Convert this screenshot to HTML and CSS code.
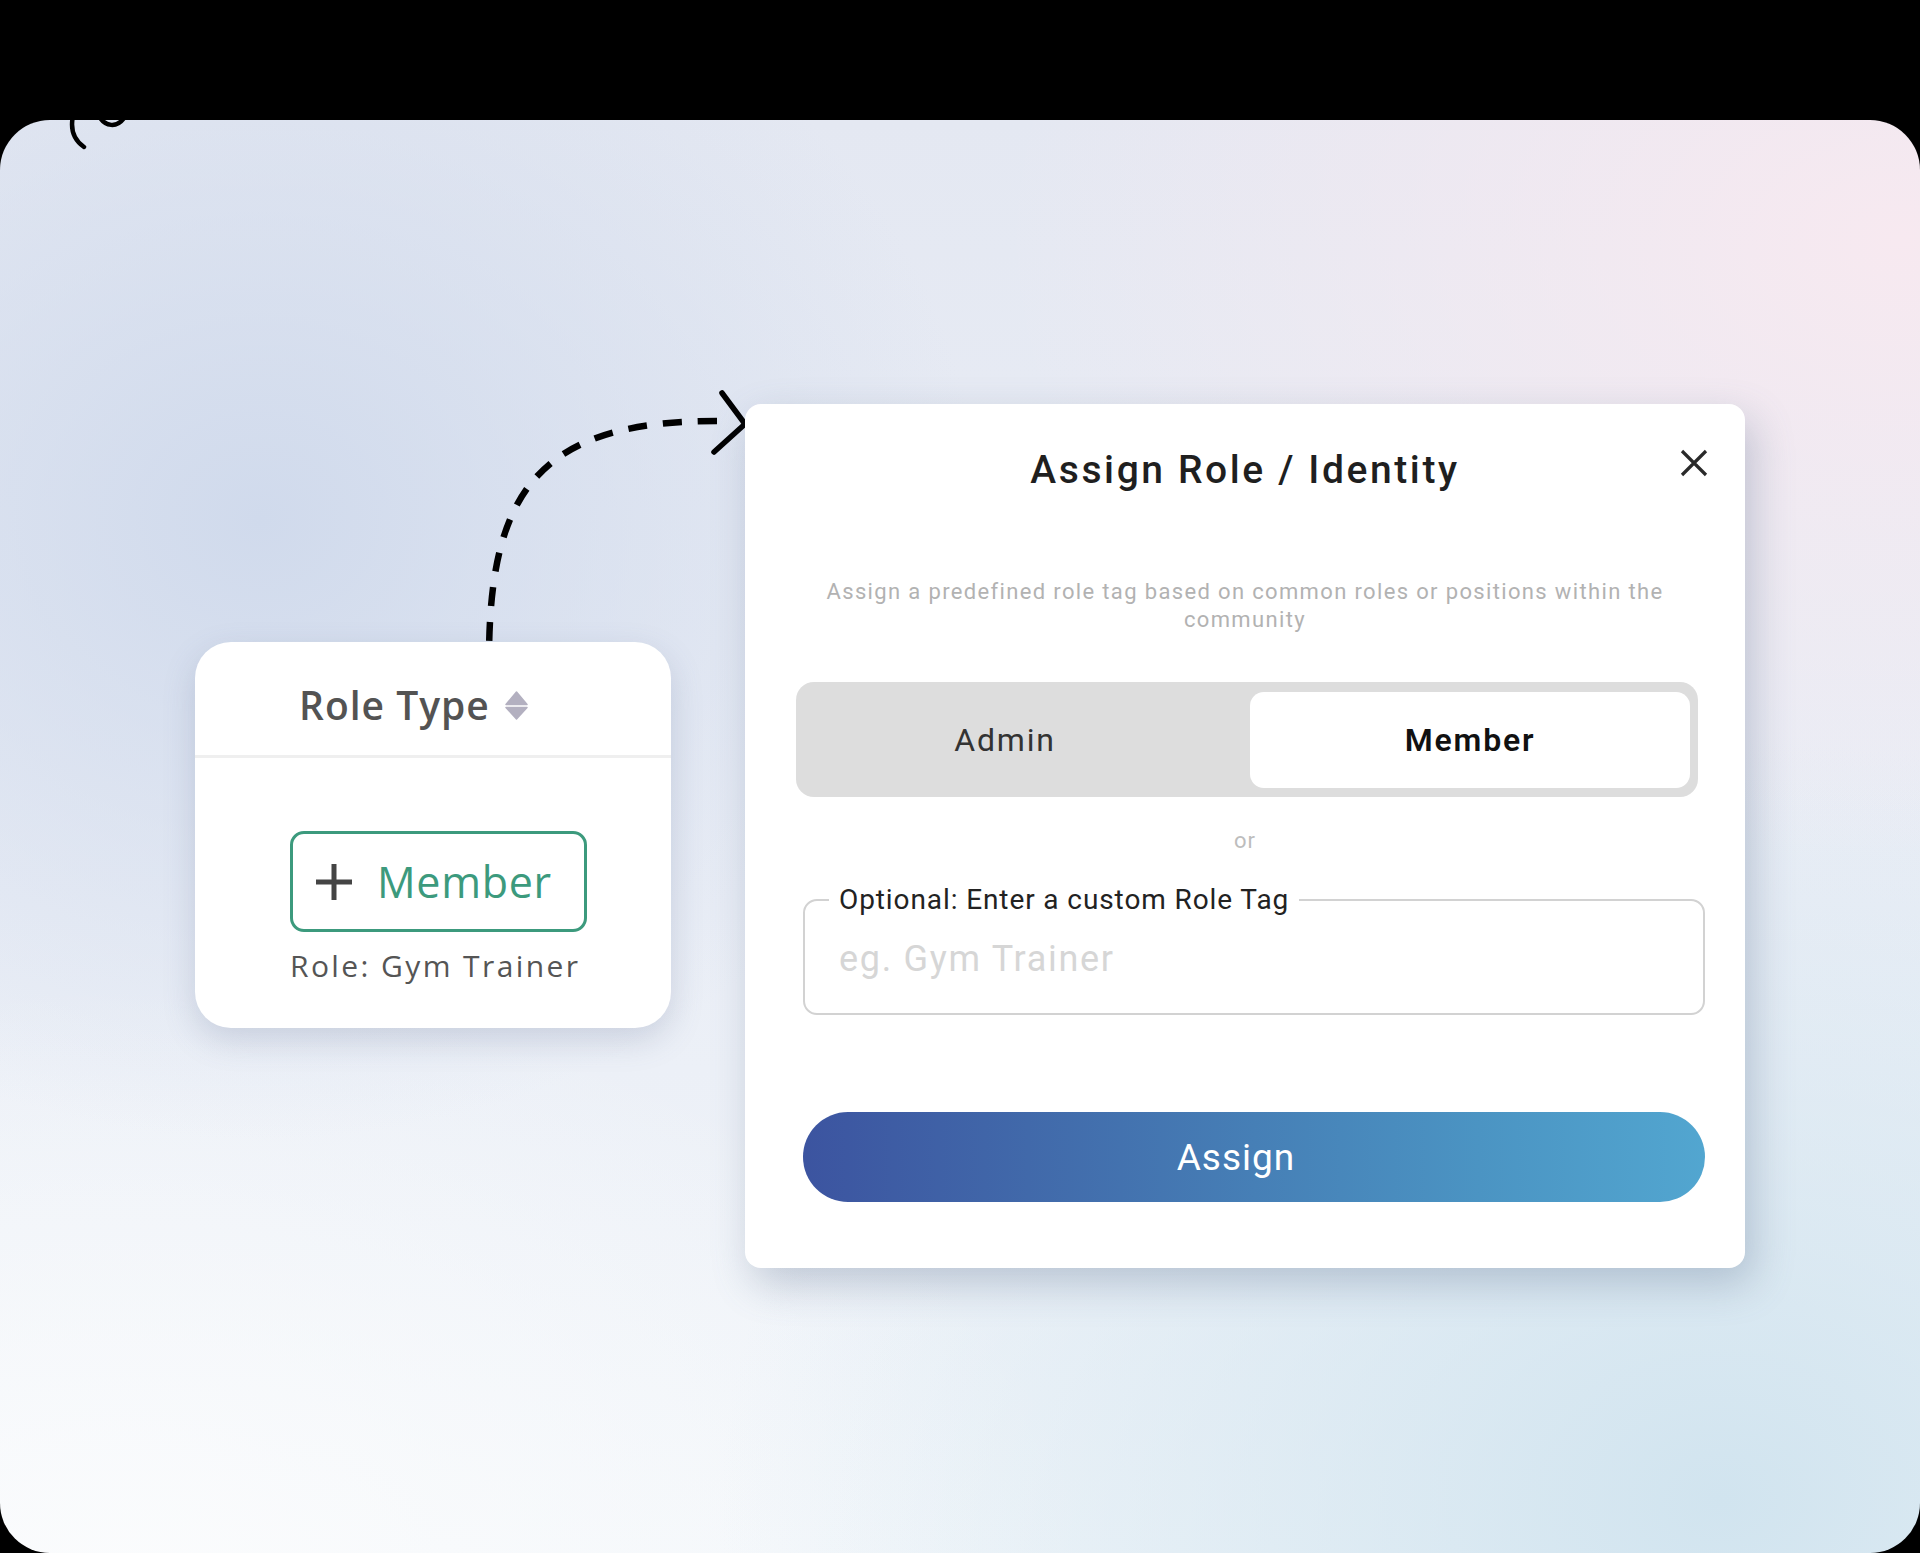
FILE: index.html
```html
<!DOCTYPE html>
<html lang="en">
<head>
<meta charset="utf-8">
<title>Assign Role / Identity</title>
<link rel="stylesheet" href="styles.css">
</head>
<body>
<div class="stage">
  <svg class="sketch" width="1920" height="1433" viewBox="0 120 1920 1433" aria-hidden="true">
    <path class="ink" d="M 73 116 C 70 130, 74 140, 84 147"/>
    <path class="ink" d="M 99 116 C 105 127, 117 128, 124 118"/>
    <path class="dash" d="M 717 421 C 540 421, 489 490, 489 660"/>
    <polyline class="ink head" points="722,393 745,424 714,452"/>
  </svg>

  <div class="role-card">
    <div class="role-head">
      <span class="role-title">Role Type</span>
      <svg class="sort" width="23" height="29" viewBox="0 0 23 29" aria-hidden="true">
        <path d="M11.5 1 L22 13.5 L1 13.5 Z"/>
        <path d="M1 16.5 L22 16.5 L11.5 28 Z"/>
      </svg>
    </div>
    <div class="role-body">
      <button class="tag-btn" type="button">
        <svg class="plus" width="38" height="38" viewBox="0 0 38 38" aria-hidden="true">
          <path d="M19 1 V37 M1 19 H37"/>
        </svg>
        <span>Member</span>
      </button>
      <div class="role-caption">Role: Gym Trainer</div>
    </div>
  </div>

  <div class="modal">
    <button class="close" type="button" aria-label="Close">
      <svg width="28" height="28" viewBox="0 0 28 28" aria-hidden="true">
        <path d="M2 2 L26 26 M26 2 L2 26"/>
      </svg>
    </button>
    <h2 class="modal-title">Assign Role / Identity</h2>
    <p class="modal-desc">Assign a predefined role tag based on common roles or positions within the community</p>
    <div class="segmented">
      <div class="seg seg-admin">Admin</div>
      <div class="seg seg-member">Member</div>
    </div>
    <div class="or">or</div>
    <fieldset class="field">
      <legend>Optional: Enter a custom Role Tag</legend>
      <input type="text" placeholder="eg. Gym Trainer">
    </fieldset>
    <button class="assign" type="button">Assign</button>
  </div>
</div>
</body>
</html>
```
FILE: styles.css
```css
html, body {
  margin: 0;
  padding: 0;
  background: #000;
}

body {
  font-family: Roboto, "Liberation Sans", sans-serif;
}

.stage {
  position: relative;
  box-sizing: border-box;
  margin-top: 120px;
  width: 1920px;
  height: 1433px;
  border-radius: 50px;
  overflow: hidden;
  display: flex;
  align-items: flex-start;
  gap: 74px;
  padding: 284px 0 0 195px;
  background:
    radial-gradient(ellipse 720px 620px at 260px 400px, rgba(208,218,236,1) 0%, rgba(208,218,236,0) 100%),
    radial-gradient(ellipse 900px 620px at 1900px 120px, rgba(247,233,240,1) 0%, rgba(247,233,240,0) 100%),
    radial-gradient(ellipse 1000px 760px at 1720px 1380px, rgba(209,228,239,1) 0%, rgba(209,228,239,0) 100%),
    radial-gradient(ellipse 1000px 620px at 120px 1480px, rgba(251,252,253,1) 0%, rgba(251,252,253,0) 100%),
    linear-gradient(180deg, #e4e8f2 0%, #eaeef6 55%, #f2f6fa 100%);
}

.sketch {
  position: absolute;
  left: 0;
  top: 0;
  pointer-events: none;
}

.sketch .ink {
  fill: none;
  stroke: #000;
  stroke-width: 4.5;
  stroke-linecap: round;
  stroke-linejoin: round;
}

.sketch .head {
  stroke-width: 5.5;
}

.sketch .dash {
  fill: none;
  stroke: #000;
  stroke-width: 6.5;
  stroke-dasharray: 19 16;
}

/* ---------- role card ---------- */
.role-card {
  position: relative;
  width: 476px;
  margin-top: 238px;
  background: #fff;
  border-radius: 36px;
  box-shadow: 0 12px 32px rgba(90, 105, 140, 0.22);
  font-family: "Open Sans", "Noto Sans", sans-serif;
}

.role-head {
  display: flex;
  align-items: center;
  gap: 15px;
  padding: 38px 0 25px 104px;
  border-bottom: 3px solid #efefef;
  line-height: 50px;
}

.role-title {
  font-size: 39px;
  font-weight: 600;
  letter-spacing: 1px;
  color: #535353;
}

.sort path {
  fill: #b3b0c0;
  stroke: #b3b0c0;
  stroke-width: 1.5;
  stroke-linejoin: round;
}

.role-body {
  padding: 73px 0 44px 95px;
}

.tag-btn {
  box-sizing: border-box;
  display: flex;
  align-items: center;
  gap: 24px;
  width: 297px;
  height: 101px;
  padding: 0 0 0 22px;
  border: 3px solid #3c9a7d;
  border-radius: 14px;
  background: #fff;
  font-family: "Open Sans", "Noto Sans", sans-serif;
  font-size: 43px;
  letter-spacing: 0.7px;
  line-height: 1;
  color: #3c9a7d;
}

.plus path {
  stroke: #444;
  stroke-width: 5;
  fill: none;
}

.role-caption {
  margin: 16px 0 0 0;
  font-size: 30px;
  line-height: 36px;
  letter-spacing: 2.4px;
  color: #555;
}

/* ---------- modal ---------- */
.modal {
  position: relative;
  box-sizing: border-box;
  width: 1000px;
  padding: 42px 40px 66px 40px;
  background: #fff;
  border-radius: 16px;
  box-shadow: 8px 16px 40px rgba(90, 110, 140, 0.32);
}

.close {
  position: absolute;
  top: 45px;
  right: 37px;
  width: 28px;
  height: 28px;
  padding: 0;
  border: 0;
  background: none;
}

.close svg {
  display: block;
}

.close path {
  stroke: #2a2a2a;
  stroke-width: 3.2;
  fill: none;
}

.modal-title {
  margin: 0;
  text-align: center;
  font-size: 39px;
  line-height: 48px;
  font-weight: 500;
  letter-spacing: 2.6px;
  color: #1f1f1f;
}

.modal-desc {
  width: 900px;
  margin: 84px auto 0;
  text-align: center;
  font-size: 22px;
  line-height: 28px;
  letter-spacing: 1.35px;
  color: #b2b2b2;
}

.segmented {
  box-sizing: border-box;
  display: grid;
  grid-template-columns: 1fr 440px;
  width: 902px;
  height: 115px;
  margin: 48px 0 0 11px;
  padding: 10px 8px 9px 0;
  background: #dddddd;
  border-radius: 18px;
}

.seg {
  display: flex;
  align-items: center;
  justify-content: center;
  font-size: 32px;
  letter-spacing: 1.8px;
}

.seg-admin {
  padding-right: 36px;
  color: #333;
}

.seg-member {
  background: #fff;
  border-radius: 14px;
  font-weight: 600;
  color: #111;
}

.or {
  margin-top: 30px;
  text-align: center;
  font-size: 22px;
  line-height: 28px;
  letter-spacing: 1px;
  color: #bdbdbd;
}

.field {
  box-sizing: border-box;
  width: 902px;
  min-inline-size: 0;
  margin: 28px 0 0 18px;
  padding: 0 24px 12px;
  border: 2px solid #d2d2d2;
  border-radius: 14px;
}

.field legend {
  padding: 0 10px;
  font-size: 28px;
  line-height: 34px;
  letter-spacing: 0.9px;
  color: #222;
}

.field input {
  box-sizing: border-box;
  display: block;
  width: 100%;
  height: 84px;
  padding: 0 10px;
  border: 0;
  outline: none;
  background: transparent;
  font-family: Roboto, "Liberation Sans", sans-serif;
  font-size: 36px;
  letter-spacing: 1.7px;
  color: #333;
}

.field input::placeholder {
  color: #d6d6d6;
}

.assign {
  display: block;
  width: 902px;
  height: 90px;
  margin: 97px 0 0 18px;
  padding: 0 36px 0 0;
  border: 0;
  border-radius: 45px;
  background: linear-gradient(90deg, #3c54a0 0%, #4169aa 25%, #467fb6 50%, #4b94c3 75%, #52a6d0 100%);
  font-family: Roboto, "Liberation Sans", sans-serif;
  font-size: 37px;
  letter-spacing: 1px;
  color: #fff;
}
```
